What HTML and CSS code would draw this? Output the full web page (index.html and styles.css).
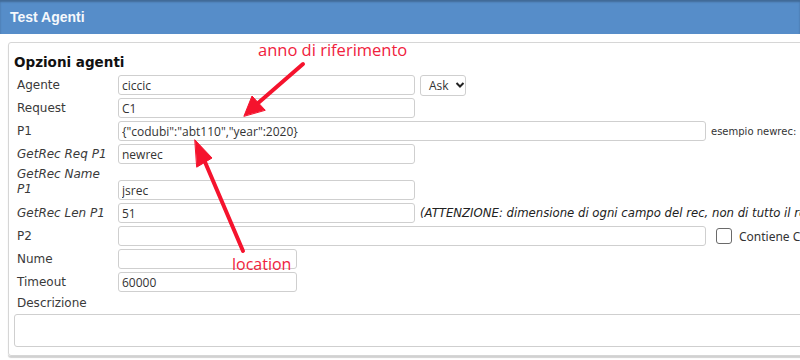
FILE: index.html
```html
<!doctype html>
<html lang="it">
    <head>
        <title>Test Agenti</title>
        <meta name="viewport" content="width=device-width, initial-scale=1"/>
        <link rel="stylesheet" href="styles.css">
    </head>
    <body>
        <div class="titlebar">Test Agenti</div>
        <div class="panel">
            <h2>Opzioni agenti</h2>
            <div class="row">
                <label>Agente</label>
                <input class="field field--md" type="text" value="ciccic">
                <div class="select">Ask
                    <svg width="10" height="8" viewBox="0 0 10 8"><path d="M1.5 2 L5 5.5 L8.5 2" fill="none" stroke="#222" stroke-width="2"/></svg>
                </div>
            </div>
            <div class="row">
                <label>Request</label>
                <input class="field field--md" type="text" value="C1">
            </div>
            <div class="row">
                <label>P1</label>
                <input class="field field--lg" type="text" value='{"codubi":"abt110","year":2020}'>
                <span class="hint">esempio newrec:</span>
            </div>
            <div class="row">
                <label class="italic">GetRec Req P1</label>
                <input class="field field--md" type="text" value="newrec">
            </div>
            <div class="row row--tall">
                <label class="italic">GetRec Name<br>P1</label>
                <input class="field field--md" type="text" value="jsrec">
            </div>
            <div class="row">
                <label class="italic">GetRec Len P1</label>
                <input class="field field--md" type="text" value="51">
                <span class="note">(ATTENZIONE: dimensione di ogni campo del rec, non di tutto il record)</span>
            </div>
            <div class="row">
                <label>P2</label>
                <input class="field field--lg" type="text" value="">
                <span class="checkbox"></span>
                <span class="check-label">Contiene Codice</span>
            </div>
            <div class="row">
                <label>Nume</label>
                <input class="field field--sm" type="text" value="">
            </div>
            <div class="row">
                <label>Timeout</label>
                <input class="field field--sm" type="text" value="60000">
            </div>
            <div class="desc-label">Descrizione</div>
            <textarea class="desc"></textarea>
        </div>

        <svg class="arrows" width="800" height="360" viewBox="0 0 800 360">
            <g stroke="#f5132d" stroke-width="4" stroke-linecap="round" fill="#f5132d">
                <line x1="303" y1="64" x2="257" y2="104"/>
                <polygon points="244,116 252,96 265,110" stroke-width="1"/>
                <line x1="243" y1="251" x2="205" y2="162"/>
                <polygon points="195,140 212,158 197,167" stroke-width="1"/>
            </g>
        </svg>
        <span class="callout callout--year">anno di riferimento</span>
        <span class="callout callout--loc">location</span>
    </body>
</html>
```

FILE: styles.css
```css
body {
    margin: 0;
    position: relative;
    overflow: hidden;
    width: 800px;
    height: 360px;
    font-family: "DejaVu Sans", sans-serif;
    background: #fff;
}
.titlebar {
    height: 34px;
    line-height: 34px;
    padding-left: 10px;
    background-color: #568dc9;
    box-shadow: inset 0 2px 2px rgba(0, 0, 0, 0.25);
    color: #f5f8fc;
    font-family: "Liberation Sans", Arial, sans-serif;
    font-weight: bold;
    font-size: 14px;
}
.panel {
    margin: 8px 0 0 8px;
    width: 1000px;
    padding: 5px 5px 8px 5px;
    border: 1px solid #d6d6d6;
    border-radius: 3px;
    box-shadow: 0 2px 1px rgba(0, 0, 0, 0.18);
}
.panel h2 {
    margin: 0 0 3px 0;
    padding-top: 4px;
    line-height: 20px;
    font-size: 13.5px;
    color: #111;
}
.row {
    display: flex;
    align-items: center;
    height: 20px;
    margin-bottom: 3px;
    white-space: nowrap;
}
.row label {
    flex: none;
    box-sizing: border-box;
    width: 104px;
    padding-left: 3px;
    font-size: 12px;
    color: #3a3a3a;
}
.row .italic {
    font-style: italic;
}
.row--tall {
    height: 33px;
    align-items: flex-end;
}
.row--tall label {
    align-self: flex-start;
    line-height: 15px;
}
.field {
    flex: none;
    box-sizing: border-box;
    height: 20px;
    margin: 0;
    padding: 0 3px;
    border: 1px solid #cfcfcf;
    border-radius: 3px;
    font-family: "Open Sans", sans-serif;
    font-size: 12px;
    color: #333;
    outline: none;
}
.field--sm {
    width: 179px;
}
.field--md {
    width: 297px;
}
.field--lg {
    width: 588px;
}
.select {
    box-sizing: border-box;
    display: flex;
    align-items: center;
    gap: 6px;
    width: 46px;
    height: 21px;
    margin-left: 5px;
    padding-left: 8px;
    border: 1px solid #cfcfcf;
    border-radius: 3px;
    font-family: "Open Sans", sans-serif;
    font-size: 12px;
    color: #333;
}
.hint {
    margin-left: 5px;
    font-size: 10px;
    color: #333;
}
.note {
    margin-left: 5px;
    font-size: 11.7px;
    font-style: italic;
    color: #222;
}
.checkbox {
    flex: none;
    box-sizing: border-box;
    width: 16px;
    height: 16px;
    margin-left: 10px;
    border: 1px solid #6a6a6a;
    border-radius: 3px;
}
.check-label {
    margin-left: 7px;
    font-family: "Noto Sans", sans-serif;
    font-size: 12px;
    color: #333;
}
.desc-label {
    margin-top: 3px;
    padding-left: 3px;
    line-height: 16px;
    font-size: 12px;
    color: #3a3a3a;
}
.desc {
    display: block;
    box-sizing: border-box;
    width: 990px;
    height: 33px;
    margin: 3px 0 0 0;
    border: 1px solid #cfcfcf;
    border-radius: 3px;
    resize: none;
}
.arrows {
    position: absolute;
    top: 0;
    left: 0;
    pointer-events: none;
}
.callout {
    position: absolute;
    font-family: "Open Sans", sans-serif;
    font-size: 16px;
    line-height: 22px;
    color: #f0223d;
    white-space: nowrap;
}
.callout--year {
    left: 258px;
    top: 39px;
    font-size: 16.5px;
}
.callout--loc {
    left: 232px;
    top: 253px;
}
```
